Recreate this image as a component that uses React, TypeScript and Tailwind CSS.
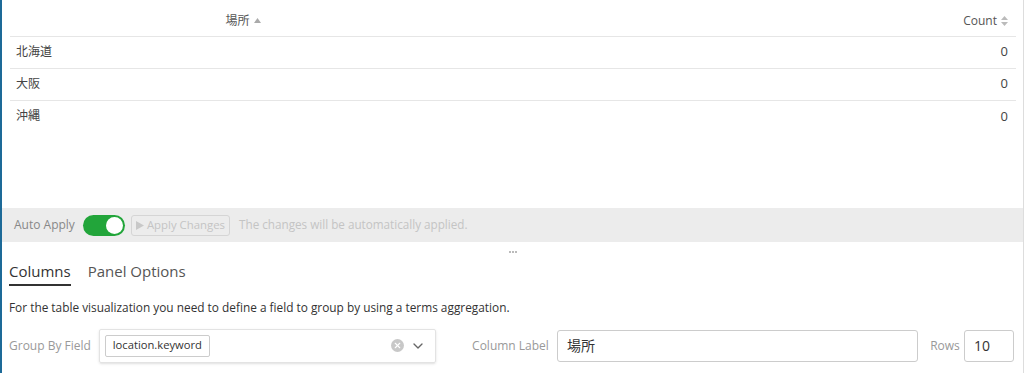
import { ChevronDown, X } from 'lucide-react';

const rows = ['北海道', '大阪', '沖縄'];

const font = { fontFamily: '"Open Sans", "Noto Sans CJK JP", sans-serif' };

const App = () => {
  return (
    <div
      className="h-[373px] w-[1024px] overflow-hidden bg-white text-[12px] text-[#444] border-l-2 border-[#1d6a98] flex flex-col"
      style={font}
    >
      <div className="flex-1 flex flex-col border-r border-[#ddd]">
        {/* table */}
        <div className="h-[208px] pl-2 pr-[7px]">
          <table className="w-full border-collapse">
            <thead>
              <tr className="h-[36px] border-b border-[#e6e6e6]">
                <th className="w-[466px] font-normal text-[12px] text-[#555] align-bottom pb-[6px]">
                  <span className="inline-flex items-center gap-1">
                    場所
                    <svg width="7" height="5" viewBox="0 0 7 5">
                      <path d="M0 5 L3.5 0 L7 5Z" fill="#aaa" />
                    </svg>
                  </span>
                </th>
                <th className="font-normal text-[12px] text-[#555] text-right pr-2 align-bottom pb-[6px]">
                  <span className="inline-flex items-center gap-1">
                    Count
                    <svg width="7" height="10" viewBox="0 0 7 10">
                      <path d="M0 4 L3.5 0 L7 4Z" fill="#bbb" />
                      <path d="M0 6 L3.5 10 L7 6Z" fill="#bbb" />
                    </svg>
                  </span>
                </th>
              </tr>
            </thead>
            <tbody>
              {rows.map((r, i) => (
                <tr key={r} className={`h-[32px] ${i < rows.length - 1 ? 'border-b border-[#e6e6e6]' : ''}`}>
                  <td className="pl-[6px]">{r}</td>
                  <td className="text-right pr-2 text-[13px]">0</td>
                </tr>
              ))}
            </tbody>
          </table>
        </div>

        {/* auto apply bar */}
        <div className="h-[34px] bg-[#ececec] flex items-center pl-3 gap-[6px]">
          <span className="text-[#888] mr-[2px]">Auto Apply</span>
          <div className="w-[42px] h-[21px] rounded-full bg-[#22a53a] relative">
            <div className="absolute right-[2px] top-[2px] w-[17px] h-[17px] rounded-full bg-white" />
          </div>
          <button className="h-[21px] px-1 border border-[#d5d5d5] rounded-[3px] text-[#c4c4c4] text-[11.4px] flex items-center gap-[3px]">
            <svg width="8" height="9" viewBox="0 0 8 9">
              <path d="M0 0 L8 4.5 L0 9Z" fill="#c8c8c8" />
            </svg>
            Apply Changes
          </button>
          <span className="text-[#c4c4c4] ml-[3px] text-[11.7px]">The changes will be automatically applied.</span>
        </div>

        {/* resize handle */}
        <div className="h-[18px] flex justify-center pt-[9px]">
          <div className="w-[8px] h-[2px] border-t-2 border-dotted border-[#bbb]" />
        </div>

        {/* tabs */}
        <div className="flex gap-[17px] pl-[7px] text-[15px] text-[#333]">
          <div className="pb-[2px] border-b-2 border-[#333] leading-[22px]">Columns</div>
          <div className="text-[#555] leading-[22px]">Panel Options</div>
        </div>

        <p className="pl-[7px] mt-[13px] text-[#333] text-[11.85px]">
          For the table visualization you need to define a field to group by using a terms aggregation.
        </p>

        {/* form row */}
        <div className="flex items-center mt-[12px] pl-[7px] pr-[9px]">
          <span className="text-[#999] w-[90px]">Group By Field</span>
          <div className="w-[338px] h-[34px] border border-[#e3e3e3] rounded-[2px] shadow-sm flex items-center px-[5px]">
            <span className="border border-[#ccc] rounded-[2px] px-[7px] h-[22px] flex items-center text-[11.2px] text-[#333]">
              location.keyword
            </span>
            <div className="ml-auto flex items-center gap-[6px] pr-[4px]">
              <div className="w-[13px] h-[13px] rounded-full bg-[#c8c8c8] flex items-center justify-center">
                <X size={9} strokeWidth={3} color="#fff" />
              </div>
              <ChevronDown size={16} color="#666" />
            </div>
          </div>
          <span className="text-[#999] ml-[36px] w-[85px]">Column Label</span>
          <div className="w-[362px] h-[32px] border border-[#ccc] rounded-[3px] flex items-center px-[9px] text-[#333] text-[14px]">
            場所
          </div>
          <span className="text-[#999] ml-[12px] w-[34px]">Rows</span>
          <div className="w-[50px] h-[32px] border border-[#ccc] rounded-[3px] flex items-center px-[9px] text-[#333] text-[14px]">
            10
          </div>
        </div>
      </div>
    </div>
  );
};

export default App;
